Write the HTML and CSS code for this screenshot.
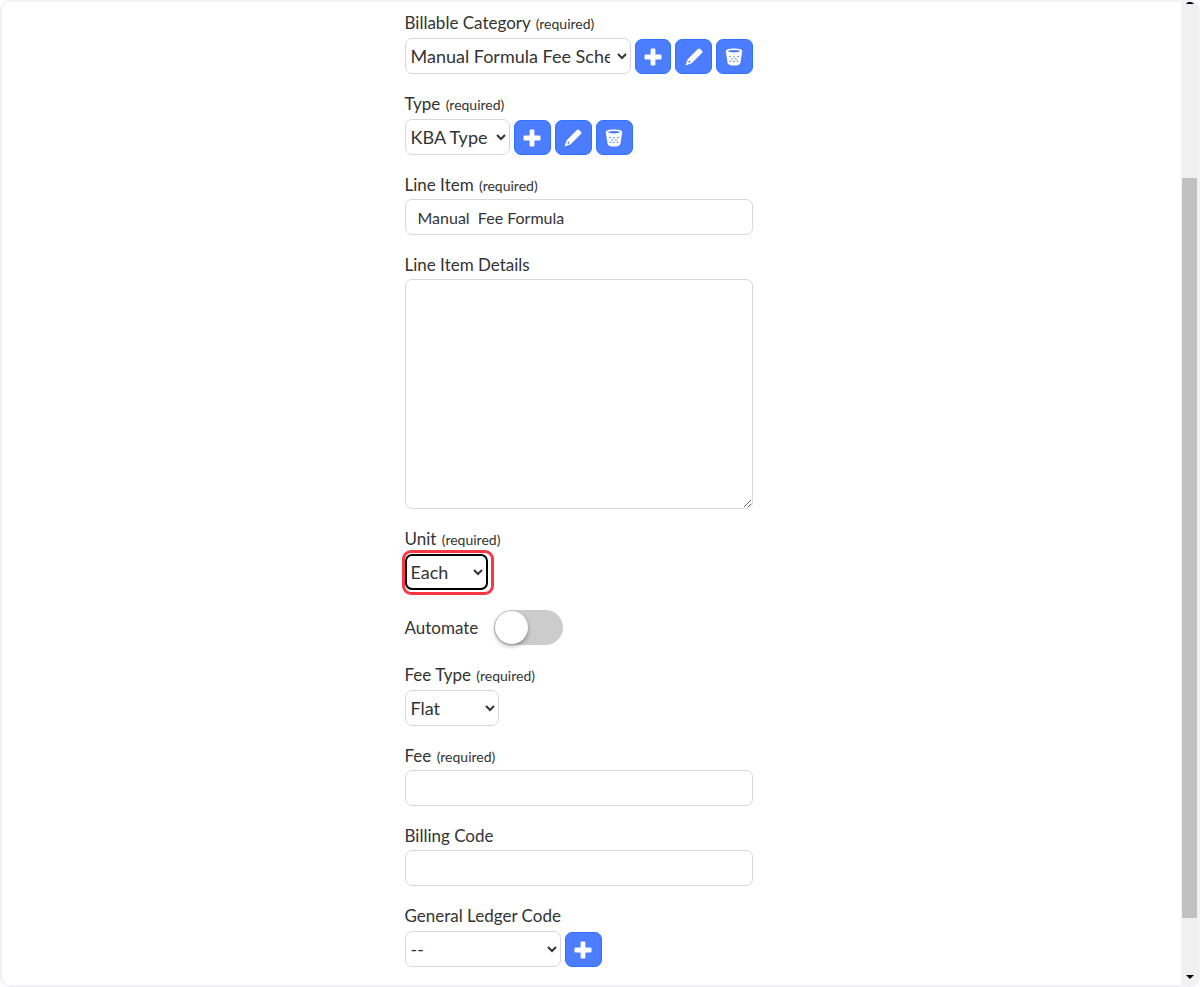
FILE: index.html
```
<!DOCTYPE html>
<html lang="en">

<head>
	<meta charset="utf-8">
	<title>Billable Line Item</title>
	<link rel="stylesheet" href="styles.css">
</head>

<body>
	<!-- icons shared by the buttons -->
	<svg class="sprite" aria-hidden="true">
		<symbol id="plus" viewBox="0 0 18 18">
			<path d="M7.6 0.5h2.8a1 1 0 0 1 1 1v5.1h5.1a1 1 0 0 1 1 1v2.8a1 1 0 0 1-1 1h-5.1v5.1a1 1 0 0 1-1 1H7.6a1 1 0 0 1-1-1v-5.1H1.5a1 1 0 0 1-1-1V7.6a1 1 0 0 1 1-1h5.1V1.5a1 1 0 0 1 1-1z" fill="currentColor"/>
		</symbol>
		<symbol id="pencil" viewBox="0 0 18 18">
			<path d="M12.9 1.1a1.6 1.6 0 0 1 2.3 0l1.7 1.7a1.6 1.6 0 0 1 0 2.3L6.7 15.3 1.3 17.3a.5.5 0 0 1-.6-.6l2-5.4z" fill="currentColor"/>
			<circle cx="4.4" cy="13.7" r="1" fill="#4d7dff"/>
		</symbol>
		<symbol id="trash" viewBox="0 0 18 18">
			<path d="M0.8 3.2C0.8 1.3 4.4 0.5 9 0.5s8.2 0.8 8.2 2.7L15.4 15c-.3 1.7-3 2.6-6.4 2.6S2.9 16.7 2.6 15z" fill="currentColor"/>
			<ellipse cx="9" cy="3.2" rx="5.8" ry="1.2" fill="#4d7dff"/>
			<g fill="#4d7dff">
				<circle cx="5" cy="8.5" r="0.8"/>
				<circle cx="9" cy="9" r="0.8"/>
				<circle cx="13" cy="8.5" r="0.8"/>
				<circle cx="7" cy="11" r="0.8"/>
				<circle cx="11" cy="11" r="0.8"/>
				<circle cx="5.5" cy="13.2" r="0.8"/>
				<circle cx="9" cy="13.5" r="0.8"/>
				<circle cx="12.5" cy="13.2" r="0.8"/>
			</g>
		</symbol>
	</svg>

	<div class="window">
		<main class="content">
			<form class="fee-form" action="">
				<div class="field">
					<label for="category">Billable Category <small>(required)</small></label>
					<div class="row">
						<select id="category" class="category">
							<option>Manual Formula Fee Schedule</option>
						</select>
						<button type="button" aria-label="Add category"><svg><use href="#plus"/></svg></button>
						<button type="button" aria-label="Edit category"><svg><use href="#pencil"/></svg></button>
						<button type="button" aria-label="Delete category"><svg><use href="#trash"/></svg></button>
					</div>
				</div>
				<div class="field">
					<label for="type">Type <small>(required)</small></label>
					<div class="row">
						<select id="type" class="type">
							<option>KBA Type</option>
						</select>
						<button type="button" aria-label="Add type"><svg><use href="#plus"/></svg></button>
						<button type="button" aria-label="Edit type"><svg><use href="#pencil"/></svg></button>
						<button type="button" aria-label="Delete type"><svg><use href="#trash"/></svg></button>
					</div>
				</div>
				<div class="field">
					<label for="item">Line Item <small>(required)</small></label>
					<input type="text" id="item" value="Manual  Fee Formula">
				</div>
				<div class="field">
					<label for="details">Line Item Details</label>
					<textarea id="details"></textarea>
				</div>
				<div class="field">
					<label for="unit">Unit <small>(required)</small></label>
					<div class="row">
						<div class="callout">
							<select id="unit" class="unit">
								<option>Each</option>
							</select>
						</div>
					</div>
				</div>
				<div class="automate">
					<label for="automate">Automate</label>
					<input type="checkbox" id="automate" class="toggle">
				</div>
				<div class="field">
					<label for="feetype">Fee Type <small>(required)</small></label>
					<div class="row">
						<select id="feetype" class="feetype">
							<option>Flat</option>
						</select>
					</div>
				</div>
				<div class="field">
					<label for="fee">Fee <small>(required)</small></label>
					<input type="text" id="fee">
				</div>
				<div class="field">
					<label for="billing">Billing Code</label>
					<input type="text" id="billing">
				</div>
				<div class="field">
					<label for="ledger">General Ledger Code</label>
					<div class="row">
						<select id="ledger" class="ledger">
							<option>--</option>
						</select>
						<button type="button" aria-label="Add ledger code"><svg><use href="#plus"/></svg></button>
					</div>
				</div>
			</form>
		</main>
		<div class="scrollbar" aria-hidden="true">
			<svg class="up" viewBox="0 0 8 2"><path d="M2 0h4l2 2H0z"/></svg>
			<div class="track">
				<div class="thumb"></div>
			</div>
			<svg class="down" viewBox="0 0 8 4"><path d="M0 0h8L4 4z"/></svg>
		</div>
	</div>
</body>

</html>
```
FILE: styles.css
```
* {
	box-sizing: border-box;
}

body {
	margin: 0;
	background: white;
	font-family: Lato, sans-serif;
	font-size: 17px;
	color: #333;
}

.sprite {
	display: none;
}

.window {
	display: flex;
	min-height: 100vh;
	border: 2px solid #f1f1f6;
	border-radius: 10px;
	overflow: hidden;
}

.content {
	flex: 1;
	display: flex;
	justify-content: center;
	padding: 11px 0 16px;
}

.fee-form {
	display: flex;
	flex-direction: column;
	gap: 20px;
	width: 374px;
	padding-right: 26px;
}

label {
	display: block;
	line-height: 20px;
}

.field label {
	margin-bottom: 4px;
}

small {
	font-size: 14px;
	line-height: 1;
	margin-left: 1px;
}

.row {
	display: flex;
	align-items: flex-end;
	gap: 4px;
	height: 37px;
}

select, input[type="text"], textarea {
	display: block;
	border: 1px solid #d8d8d8;
	border-radius: 7px;
	background: white;
	font-family: Lato, sans-serif;
	color: #333;
}

select {
	height: 36px;
	padding: 0 4px 0 1px;
	font-size: 18px;
}

input[type="text"] {
	width: 100%;
	height: 36px;
	padding: 0 12px;
	font-size: 16px;
}

textarea {
	width: 100%;
	height: 230px;
	padding: 8px 12px;
	font-size: 16px;
	resize: both;
}

.category {
	width: 226px;
}

.type {
	width: 105px;
}

.unit {
	width: 83px;
	border: 2px solid black;
	padding: 0 3px 0 0;
}

.feetype {
	width: 94px;
}

.ledger {
	width: 156px;
}

button {
	display: flex;
	align-items: center;
	justify-content: center;
	width: 37px;
	height: 35px;
	padding: 0;
	border: 1px solid #2e73ff;
	border-radius: 7px;
	background: #4d7dff;
	color: white;
}

button svg {
	width: 18px;
	height: 18px;
}

/* red marker round the unit drop-down */
.callout {
	position: relative;
}

.callout::after {
	content: "";
	position: absolute;
	top: -4px;
	right: -6px;
	bottom: -5px;
	left: -3px;
	border: 3px solid #fb3746;
	border-radius: 9px;
	pointer-events: none;
}

.automate {
	display: flex;
	align-items: center;
	gap: 16px;
	height: 35px;
}

.toggle {
	appearance: none;
	display: flex;
	align-items: center;
	width: 69px;
	height: 35px;
	margin: 0;
	padding: 1px;
	border-radius: 18px;
	background: #ccc;
}

.toggle::before {
	content: "";
	width: 33px;
	height: 33px;
	border-radius: 50%;
	background: white;
	box-shadow: 0 2px 4px rgba(0, 0, 0, 0.35);
}

.toggle:checked {
	justify-content: flex-end;
	background: #4d7dff;
}

.scrollbar {
	display: flex;
	flex-direction: column;
	align-items: center;
	width: 17px;
	background: #f0f0f0;
}

.track {
	flex: 1;
	display: flex;
	width: 15px;
	padding: 174px 0 57px;
}

.thumb {
	flex: 1;
	background: #c1c1c1;
}

.up {
	width: 8px;
	height: 2px;
}

.down {
	width: 8px;
	height: 4px;
	margin-bottom: 6px;
}
```
